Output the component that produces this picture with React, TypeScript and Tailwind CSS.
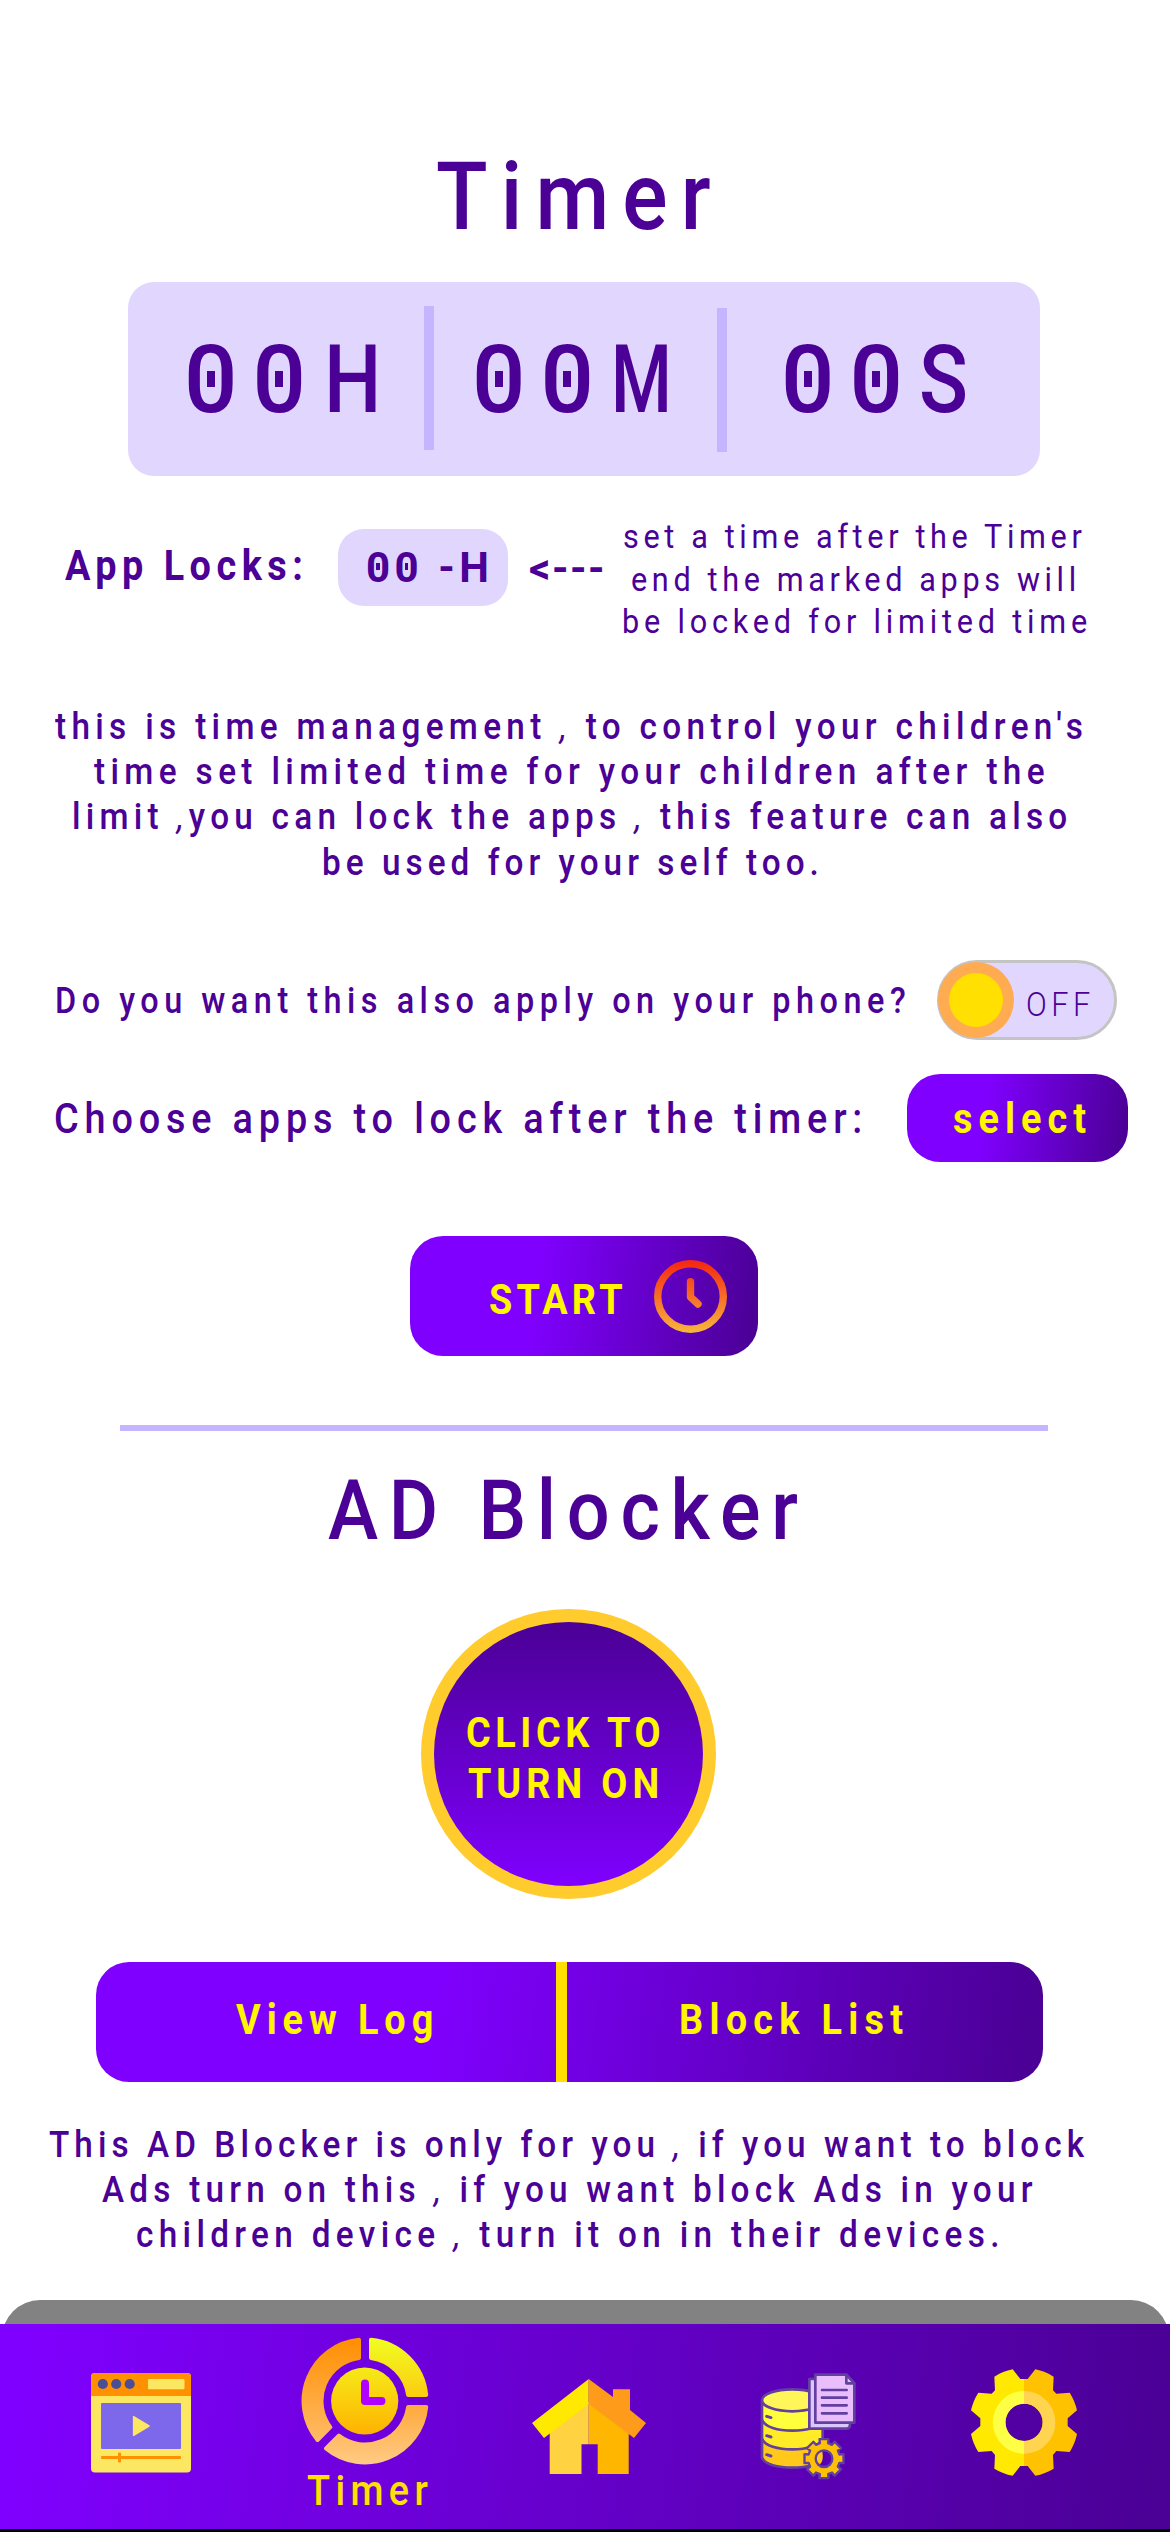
import { Fragment, type ReactNode } from "react";

/** Text whose commas are drawn in a light slanted style. */
function Copy({ text }: { text: string }) {
  return (
    <>
      {text.split(",").map((part, i) => (
        <Fragment key={i}>
          {i > 0 && <span className="font-normal italic">,</span>}
          {part}
        </Fragment>
      ))}
    </>
  );
}

/** A single line set slightly condensed, anchored at its left edge. */
function Line({ className = "", children }: { className?: string; children: ReactNode }) {
  return <p className={"w-max origin-left scale-x-90 " + className}>{children}</p>;
}

/** A zero with a square dot in its counter. */
function Zero() {
  return (
    <span className="relative">
      0
      <span className="absolute left-[0.242em] top-[0.485em] h-[0.17em] w-[0.085em] bg-[#4b0096]" />
    </span>
  );
}

function VideoIcon() {
  return (
    <svg width="100" height="100" viewBox="0 0 100 100">
      <rect width="100" height="99.5" rx="4" fill="#fce762" />
      <path d="M0 23V4a4 4 0 0 1 4-4h92a4 4 0 0 1 4 4v19z" fill="#ff9100" />
      <circle cx="11.8" cy="11" r="5.1" fill="#4b4d96" />
      <circle cx="25.2" cy="11" r="5.1" fill="#4b4d96" />
      <circle cx="38.7" cy="11" r="5.1" fill="#4b4d96" />
      <rect x="57" y="6" width="36.5" height="10.2" rx="1" fill="#fce762" />
      <rect x="10" y="30" width="80" height="46" rx="1" fill="#7d67ea" />
      <path d="M42.6 43.6v18.8L58 53z" fill="#fce762" stroke="#fce762" strokeWidth="1.5" strokeLinejoin="round" />
      <rect x="10" y="83" width="80" height="3" rx="1" fill="#ff9100" />
      <rect x="27" y="79.5" width="3" height="10" rx="1" fill="#ff9100" />
    </svg>
  );
}

function TimerIcon() {
  return (
    <svg width="128" height="128" viewBox="0 0 128 128" strokeWidth="4" strokeLinejoin="round">
      <defs>
        <linearGradient id="t1" gradientUnits="userSpaceOnUse" x1="0" y1="0" x2="0" y2="60">
          <stop stopColor="#f0ff22" />
          <stop offset="1" stopColor="#fccb10" />
        </linearGradient>
        <linearGradient id="t2" gradientUnits="userSpaceOnUse" x1="0" y1="68" x2="0" y2="128">
          <stop stopColor="#ffa93c" />
          <stop offset="1" stopColor="#ffcb86" />
        </linearGradient>
        <linearGradient id="t3" gradientUnits="userSpaceOnUse" x1="0" y1="0" x2="0" y2="104">
          <stop stopColor="#ff8e00" />
          <stop offset="1" stopColor="#ffbb66" />
        </linearGradient>
        <linearGradient id="t4" x1="0" y1="0" x2="0" y2="1">
          <stop stopColor="#f6ea18" />
          <stop offset="1" stopColor="#ffb200" />
        </linearGradient>
      </defs>
      <path d="M70 2.8A61.5 61.5 0 0 1 125.2 58H107.1A43.5 43.5 0 0 0 70 20.9z" fill="url(#t1)" stroke="url(#t1)" />
      <path d="M125.2 70A61.5 61.5 0 0 1 25 111.5L37.8 98.7A43.5 43.5 0 0 0 107.1 70z" fill="url(#t2)" stroke="url(#t2)" />
      <path d="M16.5 103A61.5 61.5 0 0 1 58 2.8V20.9A43.5 43.5 0 0 0 29.3 90.2z" fill="url(#t3)" stroke="url(#t3)" />
      <circle cx="63.7" cy="64" r="33.6" fill="url(#t4)" />
      <path d="M64 46.5V64H80.5" fill="none" stroke="#b000ff" strokeWidth="8" strokeLinecap="round" />
    </svg>
  );
}

function HouseIcon() {
  return (
    <svg width="114" height="95" viewBox="0 0 114 95">
      <path d="M56.7 23L17.7 53V95H49.5V65.3H56.7z" fill="#ffd242" />
      <path d="M56.7 23L96.7 53V95H65.7V65.3H56.7z" fill="#ffb600" />
      <path d="M56.7 0L0 44L12 59L56.7 25z" fill="#ffe900" />
      <path d="M56.7 0L81 18V10.3H98V31L114 44L102 59L56.7 25z" fill="#ff9b1a" />
    </svg>
  );
}

function toothed(cx: number, cy: number, outer: number, root: number) {
  const pts: string[] = [];
  const add = (r: number, deg: number) => {
    const a = (deg * Math.PI) / 180;
    pts.push(`${(cx + r * Math.cos(a)).toFixed(1)} ${(cy + r * Math.sin(a)).toFixed(1)}`);
  };
  for (let i = 0; i < 8; i++) {
    add(root, i * 45 - 15);
    add(outer, i * 45 - 13);
    add(outer, i * 45 + 13);
    add(root, i * 45 + 15);
  }
  return `M${pts.join("L")}z`;
}

function DatabaseIcon() {
  return (
    <svg width="120" height="130" viewBox="0 0 360 390" stroke="#6240a0" strokeWidth="8" strokeLinejoin="round" strokeLinecap="round">
      <path d="M36 235V292C42 314 86 323 127 323S212 314 218 292V235z" fill="#ffc81a" />
      <path d="M36 178V235C42 258 86 268 127 268S212 258 218 235V178z" fill="#ffec26" />
      <path d="M36 121V178C42 202 86 212 127 212S212 202 218 178V121z" fill="#ffff3c" />
      <ellipse cx="127" cy="121" rx="91" ry="33" fill="#fff75a" />
      <path d="M50 169L63 173M50 227L63 231M50 284L63 288" fill="none" strokeWidth="9" />
      <path d="M178 57H300V194Q300 205 290 206H178z" fill="#dcc6ff" />
      <path d="M196 44H289L313 70V188H196z" fill="#eabdfc" />
      <path d="M289 44V70H313z" fill="#eabdfc" />
      <path d="M216 90H290M216 113H290M216 136H290M216 160H290" />
      <path d={toothed(222, 296, 60, 48)} fill="#ffc107" strokeWidth="7" />
      <circle cx="222" cy="296" r="25" fill="#5a00b4" strokeWidth="7" />
      <path d="M217 275A21 21 0 0 0 210 313Q222 302 217 275z" fill="#ffc81a" stroke="none" />
    </svg>
  );
}

const HALF_RIGHT =
  "M672 297H683L706 268A163 163 0 0 1 761 290L759 331L769 341L809 338A163 163 0 0 1 831 391L803 415V438L831 462A163 163 0 0 1 809 516L769 513L759 525L761 566A163 163 0 0 1 706 587L683 558H672V483A56 56 0 0 0 672 371z";

function GearIcon() {
  return (
    <svg width="106" height="107" viewBox="513 267 318 321">
      <path d={HALF_RIGHT} fill="#ffe900" transform="matrix(-1 0 0 1 1344 0)" />
      <path d={HALF_RIGHT} fill="#ffc200" />
      <path d="M672.5 352A75 75 0 0 0 672.5 502" fill="none" stroke="#fcff44" strokeWidth="38" />
      <path d="M672 352A75 75 0 0 1 672 502" fill="none" stroke="#ffd451" strokeWidth="38" />
    </svg>
  );
}

function ClockIcon() {
  return (
    <svg width="73" height="73" viewBox="0 0 73 73" fill="none">
      <defs>
        <linearGradient id="ck" gradientUnits="userSpaceOnUse" x1="0" y1="3" x2="0" y2="73">
          <stop stopColor="#f52a12" />
          <stop offset="1" stopColor="#f8b73c" />
        </linearGradient>
      </defs>
      <circle cx="36.5" cy="36.5" r="32.8" stroke="url(#ck)" strokeWidth="7.4" />
      <path d="M36.5 21.8V37L44 44" stroke="url(#ck)" strokeWidth="7.4" strokeLinecap="round" strokeLinejoin="round" />
    </svg>
  );
}

function Cell({ className, unit, unitClass }: { className: string; unit: string; unitClass: string }) {
  return (
    <div className={"h-full pt-[51px] text-[94px] leading-[94px] font-medium tracking-[15px] " + className}>
      <Zero />
      <Zero />
      <span className={"inline-block origin-left " + unitClass}>{unit}</span>
    </div>
  );
}

export default function App() {
  return (
    <div className="flex h-[2532px] w-[1170px] flex-col overflow-hidden whitespace-pre bg-white font-['Roboto',sans-serif] text-[#4b0096]">
      <h1 className="mt-[150px] ml-[436px] text-[94px] leading-[94px] font-medium tracking-[14.6px]">
        <Line>Timer</Line>
      </h1>

      <div className="mt-[38px] ml-[128px] flex h-[194px] w-[912px] shrink-0 items-start rounded-[26px] bg-[#e1d7fe]">
        <Cell className="w-[296px] pl-[56px]" unit="H" unitClass="ml-[3px] scale-x-[0.86]" />
        <div className="mt-[24px] h-[144px] w-[10px] bg-[#c5b4ff]" />
        <Cell className="w-[283px] pl-[38px]" unit="M" unitClass="ml-[2px] scale-x-[0.74]" />
        <div className="mt-[26px] h-[144px] w-[10px] bg-[#c5b4ff]" />
        <Cell className="w-[313px] pl-[54px]" unit="S" unitClass="ml-[1px] scale-x-[0.86]" />
      </div>

      <div className="mt-[39px] flex h-[128px] shrink-0 items-start text-[42px] leading-[42px] font-bold">
        <div className="ml-[65px] w-[273px] pt-[30px] tracking-[6.1px]"><Line>App Locks:</Line></div>
        <div className="mt-[14px] h-[77px] w-[170px] rounded-[26px] bg-[#e1d7fe] pt-[18px] pl-[28px] tracking-[4.5px]">
          <Zero /><Zero /> -H
        </div>
        <div className="ml-[21px] w-[86px] pt-[33px] tracking-[1.5px]">&lt;---</div>
        <div className="text-[34px] leading-[42.5px] font-normal">
          <Line className="ml-[8px] tracking-[5.16px]">set a time after the Timer</Line>
          <Line className="ml-[16px] tracking-[5.15px]">end the marked apps will</Line>
          <Line className="ml-[7px] tracking-[5.34px]">be locked for limited time</Line>
        </div>
      </div>

      <div className="mt-[61px] h-[181px] shrink-0 text-[37px] leading-[45.2px] font-medium">
        <Line className="ml-[55px] tracking-[5.94px]"><Copy text="this is time management , to control your children's" /></Line>
        <Line className="ml-[94px] tracking-[5.98px]">time set limited time for your children after the</Line>
        <Line className="ml-[72px] tracking-[5.82px]"><Copy text="limit ,you can lock the apps , this feature can also" /></Line>
        <Line className="ml-[322px] tracking-[5.6px]">be used for your self too.</Line>
      </div>

      <div className="mt-[75px] flex h-[80px] shrink-0 items-start">
        <div className="ml-[55px] w-[882px] pt-[23px] text-[36px] leading-[36px] font-medium tracking-[6.13px]">
          <Line>Do you want this also apply on your phone?</Line>
        </div>
        <div className="flex h-[80px] w-[180px] items-center rounded-full border-[3px] border-[#c4c4c4] bg-[#e1d7fe]">
          <div className="-ml-[2px] flex size-[76px] shrink-0 items-center justify-center rounded-full bg-[#ffab52]">
            <div className="size-[54px] rounded-full bg-[#ffe000]" />
          </div>
          <div className="ml-[12px] pt-[8px] text-[34px] leading-[34px] font-light tracking-[5px]"><Line>OFF</Line></div>
        </div>
      </div>

      <div className="mt-[34px] flex h-[88px] shrink-0 items-start text-[42px] leading-[42px]">
        <div className="ml-[54px] w-[853px] pt-[24px] font-medium tracking-[6.5px]"><Line>Choose apps to lock after the timer:</Line></div>
        <div className="h-[88px] w-[221px] rounded-[33px] bg-[linear-gradient(98deg,#8000ff_35%,#4b0096_98%)] pt-[24px] pl-[46px] font-bold tracking-[6.75px] text-[#fff600]">
          <Line>select</Line>
        </div>
      </div>

      <div className="mt-[74px] ml-[410px] flex h-[120px] w-[348px] shrink-0 items-start rounded-[33px] bg-[linear-gradient(98deg,#8000ff_36%,#4b0096_98%)]">
        <div className="ml-[79px] w-[165px] pt-[43px] text-[42px] leading-[42px] font-bold tracking-[4.7px] text-[#fff600]"><Line>START</Line></div>
        <div className="mt-[24px]"><ClockIcon /></div>
      </div>

      <div className="mt-[69px] ml-[120px] h-[6px] w-[928px] shrink-0 bg-[#c5b4ff]" />

      <h2 className="mt-[38px] ml-[328px] text-[84px] leading-[84px] font-medium tracking-[11.9px]">
        <Line>AD Blocker</Line>
      </h2>

      <div className="mt-[56px] ml-[421px] h-[290px] w-[295px] shrink-0 rounded-[50%] bg-[#ffcb2d] p-[13px]">
        <div className="h-full rounded-[50%] bg-linear-to-b from-[#4b0096] to-[#8000ff] pt-[85px] text-[42px] leading-[51px] font-bold text-[#fff600]">
          <Line className="ml-[32px] tracking-[5.1px]">CLICK TO</Line>
          <Line className="ml-[34px] tracking-[5.5px]">TURN ON</Line>
        </div>
      </div>

      <div className="mt-[63px] ml-[96px] flex h-[120px] w-[947px] shrink-0 rounded-[33px] bg-[linear-gradient(97deg,#8000ff_35%,#4b0096_98%)] text-[42px] leading-[42px] font-bold text-[#fff600]">
        <div className="w-[460px] pt-[37px] pl-[140px] tracking-[6.6px]"><Line>View Log</Line></div>
        <div className="w-[11px] bg-[#ffe000]" />
        <div className="pt-[37px] pl-[112px] tracking-[7px]"><Line>Block List</Line></div>
      </div>

      <div className="mt-[40px] h-[136px] shrink-0 text-[37px] leading-[45.2px] font-medium">
        <Line className="ml-[49px] tracking-[5.63px]"><Copy text="This AD Blocker is only for you , if you want to block" /></Line>
        <Line className="ml-[102px] tracking-[5.8px]"><Copy text="Ads turn on this , if you want block Ads in your" /></Line>
        <Line className="ml-[136px] tracking-[5.93px]"><Copy text="children device , turn it on in their devices." /></Line>
      </div>

      <div className="mx-[1.5px] mt-[42px] -mb-[36px] h-[60px] shrink-0 rounded-t-[38px] bg-[#828282]" />
      <nav className="relative flex h-[208px] shrink-0 items-start border-b-[3px] border-black bg-[linear-gradient(98deg,#8000ff_2%,#4b0096_98%)]">
        <div className="mt-[49px] ml-[91px]"><VideoIcon /></div>
        <div className="mt-[13px] ml-[110px] w-[128px]">
          <TimerIcon />
          <div className="mt-[5px] ml-[6px] text-[42px] leading-[42px] font-medium tracking-[6px] text-[#ffe000]"><Line>Timer</Line></div>
        </div>
        <div className="mt-[55px] ml-[103px]"><HouseIcon /></div>
        <div className="mt-[36px] ml-[104px]"><DatabaseIcon /></div>
        <div className="mt-[45px] ml-[101px]"><GearIcon /></div>
      </nav>
    </div>
  );
}
